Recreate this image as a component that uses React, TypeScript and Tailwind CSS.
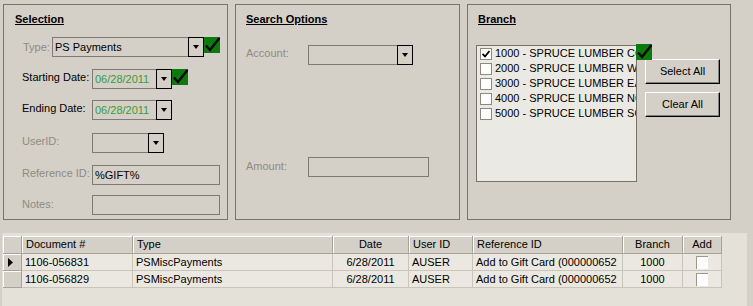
import React from 'react';

const GreenCheck = () => (
  <svg width="16" height="16" viewBox="0 0 16 16" className="block">
    <rect width="16" height="16" fill="#0b7a0b" />
    <path d="M2 8.5L6 13L15.5 1" stroke="#000" strokeWidth="2.4" fill="none" />
  </svg>
);

const DropButton = () => (
  <div className="-my-px -mr-px h-[20px] w-[16px] shrink-0 border border-black bg-[#d4d0c8] flex items-center justify-center">
    <svg width="6" height="4" viewBox="0 0 6 4" className="block">
      <path d="M0 0h6L3 4z" fill="#000" />
    </svg>
  </div>
);

function Combo({ width, children }: { width: string; children?: React.ReactNode }) {
  return (
    <div className={`${width} h-[20px] shrink-0 border border-[#7f7b72] flex items-center justify-between`}>
      <span className="pl-[2px] whitespace-nowrap">{children}</span>
      <DropButton />
    </div>
  );
}

function TextBox({ width, height = 'h-[20px]', children }: { width: string; height?: string; children?: React.ReactNode }) {
  return (
    <div className={`${width} ${height} shrink-0 border border-[#7f7b72] flex items-center pl-[2px] whitespace-nowrap`}>
      {children}
    </div>
  );
}

const BRANCHES = [
  { label: '1000 - SPRUCE LUMBER CORPORATE', checked: true },
  { label: '2000 - SPRUCE LUMBER WEST', checked: false },
  { label: '3000 - SPRUCE LUMBER EAST', checked: false },
  { label: '4000 - SPRUCE LUMBER NORTH', checked: false },
  { label: '5000 - SPRUCE LUMBER SOUTH', checked: false },
];

const ROWS = [
  { doc: '1106-056831', type: 'PSMiscPayments', date: '6/28/2011', user: 'AUSER', ref: 'Add to Gift Card (000000652', branch: '1000', current: true },
  { doc: '1106-056829', type: 'PSMiscPayments', date: '6/28/2011', user: 'AUSER', ref: 'Add to Gift Card (000000652', branch: '1000', current: false },
];

const headCell = 'h-[18px] bg-[#d4d0c8] border-r border-b border-[#a7a396] shadow-[inset_1px_1px_0_#fff] flex items-center px-[4px] whitespace-nowrap overflow-hidden';
const bodyCell = 'h-[17px] bg-[#ebe8e1] border-r border-b border-[#c9c5bb] flex items-center px-[3px] whitespace-nowrap overflow-hidden';
const rowHead = 'h-[17px] bg-[#d4d0c8] border-r border-b border-[#a7a396] shadow-[inset_1px_1px_0_#fff] flex items-center';

export default function App() {
  return (
    <div className="w-[753px] h-[306px] overflow-hidden bg-[#d4d0c8] text-black text-[11px] leading-[13px] font-['Liberation_Sans',Arial,sans-serif] flex flex-col">
      <div className="flex gap-[7px] pl-[3px] pt-[4px]">
        {/* Selection */}
        <section className="w-[225px] h-[216px] shrink-0 border border-[#77736a] flex flex-col">
          <div className="mt-[8px] ml-[11px] font-bold underline">Selection</div>

          <div className="mt-[11px] ml-[19px] flex items-start h-[20px]">
            <span className="w-[29px] mt-[4px] text-[#8f8b82]">Type:</span>
            <Combo width="w-[152px]">PS Payments</Combo>
            <GreenCheck />
          </div>

          <div className="mt-[12px] ml-[18px] flex items-start h-[20px]">
            <span className="w-[70px] mt-[2px]">Starting Date:</span>
            <Combo width="w-[80px]"><span className="text-[#3b9b3b]">06/28/2011</span></Combo>
            <GreenCheck />
          </div>

          <div className="mt-[11px] ml-[18px] flex items-start h-[20px]">
            <span className="w-[70px] mt-[2px]">Ending Date:</span>
            <Combo width="w-[80px]"><span className="text-[#3b9b3b]">06/28/2011</span></Combo>
          </div>

          <div className="mt-[13px] ml-[18px] flex items-start h-[20px]">
            <span className="w-[70px] mt-[2px] text-[#8f8b82]">UserID:</span>
            <Combo width="w-[72px]" />
          </div>

          <div className="mt-[12px] ml-[18px] flex items-start h-[20px]">
            <span className="w-[70px] mt-[2px] text-[#8f8b82]">Reference ID:</span>
            <TextBox width="w-[128px]">%GIFT%</TextBox>
          </div>

          <div className="mt-[10px] ml-[18px] flex items-start h-[20px]">
            <span className="w-[70px] mt-[3px] text-[#8f8b82]">Notes:</span>
            <TextBox width="w-[128px]" />
          </div>
        </section>

        {/* Search Options */}
        <section className="w-[225px] h-[216px] shrink-0 border border-[#77736a] flex flex-col">
          <div className="mt-[8px] ml-[10px] font-bold underline">Search Options</div>

          <div className="mt-[19px] ml-[10px] flex items-start h-[20px]">
            <span className="w-[62px] mt-[2px] text-[#8f8b82]">Account:</span>
            <Combo width="w-[105px]" />
          </div>

          <div className="mt-[92px] ml-[10px] flex items-start h-[20px]">
            <span className="w-[62px] mt-[3px] text-[#8f8b82]">Amount:</span>
            <TextBox width="w-[121px]" />
          </div>
        </section>

        {/* Branch */}
        <section className="w-[264px] h-[216px] shrink-0 border border-[#77736a] flex flex-col">
          <div className="mt-[8px] ml-[10px] font-bold underline">Branch</div>

          <div className="mt-[19px] ml-[8px] flex items-start">
            <div className="relative">
              <div className="w-[161px] h-[137px] border border-[#77736a] bg-[#ebe9e4] overflow-hidden">
                {BRANCHES.map((b) => (
                  <div key={b.label} className="h-[15px] flex items-center pl-[3px] whitespace-nowrap">
                    <div className="w-[12px] h-[12px] shrink-0 border border-[#8d897f] bg-white flex items-center justify-center">
                      {b.checked && (
                        <svg width="8" height="8" viewBox="0 0 8 8" className="block">
                          <path d="M0.5 4L3 6.5L7.5 1" stroke="#000" strokeWidth="1.8" fill="none" />
                        </svg>
                      )}
                    </div>
                    <span className="ml-[3px]">{b.label}</span>
                  </div>
                ))}
              </div>
              <div className="absolute left-[160px] top-[-1px] z-10">
                <GreenCheck />
              </div>
            </div>

            <div className="ml-[8px] mt-[14px] flex flex-col gap-[8px]">
              {['Select All', 'Clear All'].map((t) => (
                <button
                  key={t}
                  type="button"
                  className="w-[75px] h-[25px] bg-[#d4d0c8] border border-t-white border-l-white border-r-black border-b-black shadow-[inset_-1px_-1px_0_#808080] flex items-center justify-center"
                >
                  {t}
                </button>
              ))}
            </div>
          </div>
        </section>
      </div>

      {/* Results grid */}
      <div className="mt-[13px] ml-[2px] w-[745px] flex-1 bg-[#e4e1d9] pt-[3px] pl-[1px]">
        <div className="grid grid-cols-[19px_111px_200px_76px_64px_150px_60px_39px] w-max">
          <div className={headCell} />
          <div className={headCell}>Document #</div>
          <div className={headCell}>Type</div>
          <div className={`${headCell} justify-center`}>Date</div>
          <div className={headCell}>User ID</div>
          <div className={headCell}>Reference ID</div>
          <div className={`${headCell} justify-center`}>Branch</div>
          <div className={`${headCell} justify-center`}>Add</div>

          {ROWS.map((r) => (
            <React.Fragment key={r.doc}>
              <div className={`${rowHead} pl-[5px]`}>
                {r.current && (
                  <svg width="5" height="9" viewBox="0 0 5 9" className="block">
                    <path d="M0 0L5 4.5L0 9z" fill="#000" />
                  </svg>
                )}
              </div>
              <div className={bodyCell}>{r.doc}</div>
              <div className={bodyCell}>{r.type}</div>
              <div className={`${bodyCell} justify-center`}>{r.date}</div>
              <div className={bodyCell}>{r.user}</div>
              <div className={bodyCell}>{r.ref}</div>
              <div className={`${bodyCell} justify-center`}>{r.branch}</div>
              <div className={`${bodyCell} justify-center`}>
                <div className="w-[12px] h-[13px] bg-white border-l border-t border-[#9c988e]" />
              </div>
            </React.Fragment>
          ))}
        </div>
      </div>
    </div>
  );
}
